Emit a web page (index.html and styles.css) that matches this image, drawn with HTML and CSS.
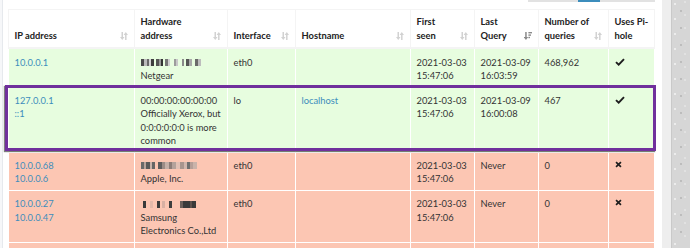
FILE: index.html
```html
<!DOCTYPE html>
<html lang="en">
<head>
<meta charset="utf-8">
<title>Network</title>
<link rel="stylesheet" href="styles.css">
</head>
<body>
<div class="page">
  <div class="edge"></div>
  <main class="content">
    <div class="pager-row"><div class="pager"></div></div>
    <div class="table-wrap">
      <table class="net">
        <colgroup>
          <col class="c-ip"><col class="c-hw"><col class="c-if"><col class="c-host"><col class="c-first"><col class="c-last"><col class="c-num"><col class="c-uses">
        </colgroup>
        <thead>
          <tr>
            <th>IP address<svg class="sort" viewBox="0 0 8 8"><rect x="1.5" y="0" width="1.5" height="5"/><polygon points="0,5 4.5,5 2.25,8"/><polygon points="3.6,3 8,3 5.8,0"/><rect x="5.05" y="3" width="1.5" height="5"/></svg></th>
            <th>Hardware<br>address<svg class="sort" viewBox="0 0 8 8"><rect x="1.5" y="0" width="1.5" height="5"/><polygon points="0,5 4.5,5 2.25,8"/><polygon points="3.6,3 8,3 5.8,0"/><rect x="5.05" y="3" width="1.5" height="5"/></svg></th>
            <th>Interface<svg class="sort" viewBox="0 0 8 8"><rect x="1.5" y="0" width="1.5" height="5"/><polygon points="0,5 4.5,5 2.25,8"/><polygon points="3.6,3 8,3 5.8,0"/><rect x="5.05" y="3" width="1.5" height="5"/></svg></th>
            <th>Hostname<svg class="sort" viewBox="0 0 8 8"><rect x="1.5" y="0" width="1.5" height="5"/><polygon points="0,5 4.5,5 2.25,8"/><polygon points="3.6,3 8,3 5.8,0"/><rect x="5.05" y="3" width="1.5" height="5"/></svg></th>
            <th>First<br>seen<svg class="sort" viewBox="0 0 8 8"><rect x="1.5" y="0" width="1.5" height="5"/><polygon points="0,5 4.5,5 2.25,8"/><polygon points="3.6,3 8,3 5.8,0"/><rect x="5.05" y="3" width="1.5" height="5"/></svg></th>
            <th>Last<br>Query<svg class="sort sorted" viewBox="0 0 8 8"><rect x="1.2" y="0" width="1.5" height="5"/><polygon points="-0.3,5 4.2,5 1.95,8"/><rect x="4.4" y="0" width="3.6" height="1.4"/><rect x="4.4" y="2.4" width="2.6" height="1.4"/><rect x="4.4" y="4.8" width="1.6" height="1.4"/></svg></th>
            <th>Number of<br>queries<svg class="sort" viewBox="0 0 8 8"><rect x="1.5" y="0" width="1.5" height="5"/><polygon points="0,5 4.5,5 2.25,8"/><polygon points="3.6,3 8,3 5.8,0"/><rect x="5.05" y="3" width="1.5" height="5"/></svg></th>
            <th class="nosort">Uses Pi-<br>hole</th>
          </tr>
        </thead>
        <tbody>
          <tr class="ok">
            <td><a href="#">10.0.0.1</a></td>
            <td><span class="mac mac1"></span><br>Netgear</td>
            <td>eth0</td>
            <td></td>
            <td>2021-03-03<br>15:47:06</td>
            <td>2021-03-09<br>16:03:59</td>
            <td>468,962</td>
            <td><svg class="yes" viewBox="0 0 10 8"><path d="M1 4.1 L3.7 6.7 L9 1.2"/></svg></td>
          </tr>
          <tr class="ok">
            <td><a href="#">127.0.0.1</a><br><a href="#">::1</a></td>
            <td>00:00:00:00:00:00<br>Officially Xerox, but<br>0:0:0:0:0:0 is more<br>common</td>
            <td>lo</td>
            <td><a href="#">localhost</a></td>
            <td>2021-03-03<br>15:47:06</td>
            <td>2021-03-09<br>16:00:08</td>
            <td>467</td>
            <td><svg class="yes" viewBox="0 0 10 8"><path d="M1 4.1 L3.7 6.7 L9 1.2"/></svg></td>
          </tr>
          <tr class="bad">
            <td><a href="#">10.0.0.68</a><br><a href="#">10.0.0.6</a></td>
            <td><span class="mac mac3"></span><br>Apple, Inc.</td>
            <td>eth0</td>
            <td></td>
            <td>2021-03-03<br>15:47:06</td>
            <td>Never</td>
            <td>0</td>
            <td><svg class="no" viewBox="0 0 8 8"><path d="M1.2 1.2 L6.8 6.8 M6.8 1.2 L1.2 6.8"/></svg></td>
          </tr>
          <tr class="bad">
            <td><a href="#">10.0.0.27</a><br><a href="#">10.0.0.47</a></td>
            <td><span class="mac mac4"></span><br>Samsung<br>Electronics Co.,Ltd</td>
            <td>eth0</td>
            <td></td>
            <td>2021-03-03<br>15:47:06</td>
            <td>Never</td>
            <td>0</td>
            <td><svg class="no" viewBox="0 0 8 8"><path d="M1.2 1.2 L6.8 6.8 M6.8 1.2 L1.2 6.8"/></svg></td>
          </tr>
          <tr class="bad">
            <td>&nbsp;</td><td></td><td></td><td></td><td></td><td></td><td></td><td></td>
          </tr>
        </tbody>
      </table>
      <div class="highlight"></div>
    </div>
  </main>
  <div class="scroll-gap"></div>
  <div class="scroll-bg"></div>
</div>
</body>
</html>
```

FILE: styles.css
```css
* { box-sizing: border-box; }

html, body {
  margin: 0;
  padding: 0;
  background: #ffffff;
  height: 248px;
  overflow: hidden;
}

body {
  font-family: "Source Sans Pro", Lato, "Open Sans", sans-serif;
  font-size: 9.33px;
  line-height: 13.33px;
  color: #333333;
}

.page {
  display: flex;
  height: 248px;
}

.edge {
  width: 3px;
  flex: none;
  background: #f6f7f9;
  border-right: 1px solid #e6e9ed;
}

.content {
  width: 659px;
  flex: none;
  padding: 0 7px 0 5px;
  background: #ffffff;
}

.pager-row {
  display: flex;
  justify-content: flex-end;
  height: 2px;
}

.pager {
  width: 127px;
  height: 1.5px;
  background: linear-gradient(to right, #e2e2e2 0, #e2e2e2 50px, #3c8dbc 50px, #3c8dbc 72px, #e2e2e2 72px);
}

.table-wrap {
  position: relative;
  margin-top: 7px;
}

.net {
  width: 646px;
  table-layout: fixed;
  border-collapse: collapse;
  border: 1px solid #f4f4f4;
}

.c-ip { width: 126px; }
.c-hw { width: 93px; }
.c-if { width: 68px; }
.c-host { width: 115px; }
.c-first { width: 64px; }
.c-last { width: 64px; }
.c-num { width: 70px; }
.c-uses { width: 46px; }

.net th {
  position: relative;
  text-align: left;
  vertical-align: bottom;
  font-weight: 700;
  white-space: nowrap;
  padding: 5.33px 18px 5.33px 5.5px;
  border: 1px solid #f4f4f4;
  border-bottom: 2px solid #f4f4f4;
  color: #222;
}

.net th.nosort { padding-right: 4px; }

.sort {
  position: absolute;
  right: 6px;
  bottom: 7px;
  width: 8px;
  height: 8px;
  fill: #d2d2d2;
}

.sort.sorted { fill: #8a8a8a; }

.net td {
  vertical-align: top;
  white-space: nowrap;
  overflow: hidden;
  padding: 6.3px 5px 4.4px 5.5px;
  border: 1px solid rgba(255, 255, 255, 0.55);
}

.ok td { background: #e7fddf; }
.bad td { background: #fcc6b3; }

a {
  color: #3c8dbc;
  text-decoration: none;
}

.yes, .no {
  display: block;
  margin: 2px 0 0 0;
  fill: none;
  stroke: #1e1e1e;
  stroke-width: 1.9;
}

.yes { width: 10px; height: 8px; }
.no { width: 7px; height: 7px; margin-left: 0.5px; }

.mac {
  display: inline-block;
  height: 7px;
  vertical-align: -0.5px;
}

.mac1 {
  width: 68px;
  background: linear-gradient(to right,
    #4a4a4a 0, #4a4a4a 3px, #bbbbbb 3px, #bbbbbb 6px, #6a6a6a 6px, #6a6a6a 8px, #d6d6d6 8px, #d6d6d6 10px,
    #3e3e3e 10px, #3e3e3e 13px, #e8fde0 13px, #e8fde0 15px, #555 15px, #555 18px, #9a9a9a 18px, #9a9a9a 20px,
    #333 20px, #333 22px, #e8fde0 22px, #e8fde0 24px, #777 24px, #777 27px, #cfcfcf 27px, #cfcfcf 29px,
    #e8fde0 29px, #e8fde0 33px, #9c9c9c 33px, #9c9c9c 35px, #c8c8c8 35px, #c8c8c8 37px, #e8fde0 37px, #e8fde0 41px,
    #8a8a8a 41px, #8a8a8a 43px, #e8fde0 43px, #e8fde0 45px, #555 45px, #555 48px, #aaa 48px, #aaa 51px,
    #e8fde0 51px, #e8fde0 54px, #6a6a6a 54px, #6a6a6a 57px, #bdbdbd 57px, #bdbdbd 60px, #e8fde0 60px);
}

.mac3 {
  width: 68px;
  background: linear-gradient(to right,
    #6a6a6a 0, #6a6a6a 3px, #b8a39b 3px, #b8a39b 5px, #5a5a5a 5px, #5a5a5a 9px, #c9b2a9 9px, #c9b2a9 11px,
    #666 11px, #666 14px, #fcc6b3 14px, #fcc6b3 17px, #5e5e5e 17px, #5e5e5e 21px, #9b8c86 21px, #9b8c86 24px,
    #c4b0a8 24px, #c4b0a8 28px, #8c7d78 28px, #8c7d78 31px, #b4a29b 31px, #b4a29b 35px, #e2c1b5 35px, #e2c1b5 39px,
    #a8958e 39px, #a8958e 43px, #d0b6ad 43px, #d0b6ad 46px, #6f6f6f 46px, #6f6f6f 49px, #b59f98 49px, #b59f98 52px,
    #c9b3aa 52px, #c9b3aa 56px, #fcc6b3 56px);
}

.mac4 {
  width: 68px;
  background: linear-gradient(to right,
    #fcc6b3 0, #fcc6b3 2px, #3a3a3a 2px, #3a3a3a 5px, #fcc6b3 5px, #fcc6b3 9px, #e4b9aa 9px, #e4b9aa 12px,
    #fcc6b3 12px, #fcc6b3 16px, #3a3a3a 16px, #3a3a3a 19px, #fcc6b3 19px, #fcc6b3 21px, #d9b0a3 21px, #d9b0a3 24px,
    #fcc6b3 24px, #fcc6b3 28px, #3e3e3e 28px, #3e3e3e 31px, #fcc6b3 31px, #fcc6b3 39px, #6c5f5a 39px, #6c5f5a 42px,
    #3a3a3a 42px, #3a3a3a 49px, #5c514d 49px, #5c514d 51px, #3a3a3a 51px, #3a3a3a 55px, #fcc6b3 55px);
}

.highlight {
  position: absolute;
  left: -3px;
  top: 76px;
  width: 651px;
  height: 66px;
  border: 3px solid #70309c;
  box-shadow: -1px 1px 1px rgba(40, 40, 40, 0.6);
  pointer-events: none;
}

.scroll-gap {
  width: 10px;
  flex: none;
  background: #eeeeee;
  border-right: 1px solid #c9c9c9;
}

.scroll-bg {
  flex: 1;
  background-color: #d6d6d6;
  background-image:
    radial-gradient(circle at 3px 4px, #ececec 0.8px, transparent 1.2px),
    radial-gradient(circle at 9px 11px, #bcbcbc 0.7px, transparent 1.1px),
    radial-gradient(circle at 13px 2px, #e6e6e6 0.6px, transparent 1px);
  background-size: 17px 15px, 13px 17px, 19px 13px;
}
```
